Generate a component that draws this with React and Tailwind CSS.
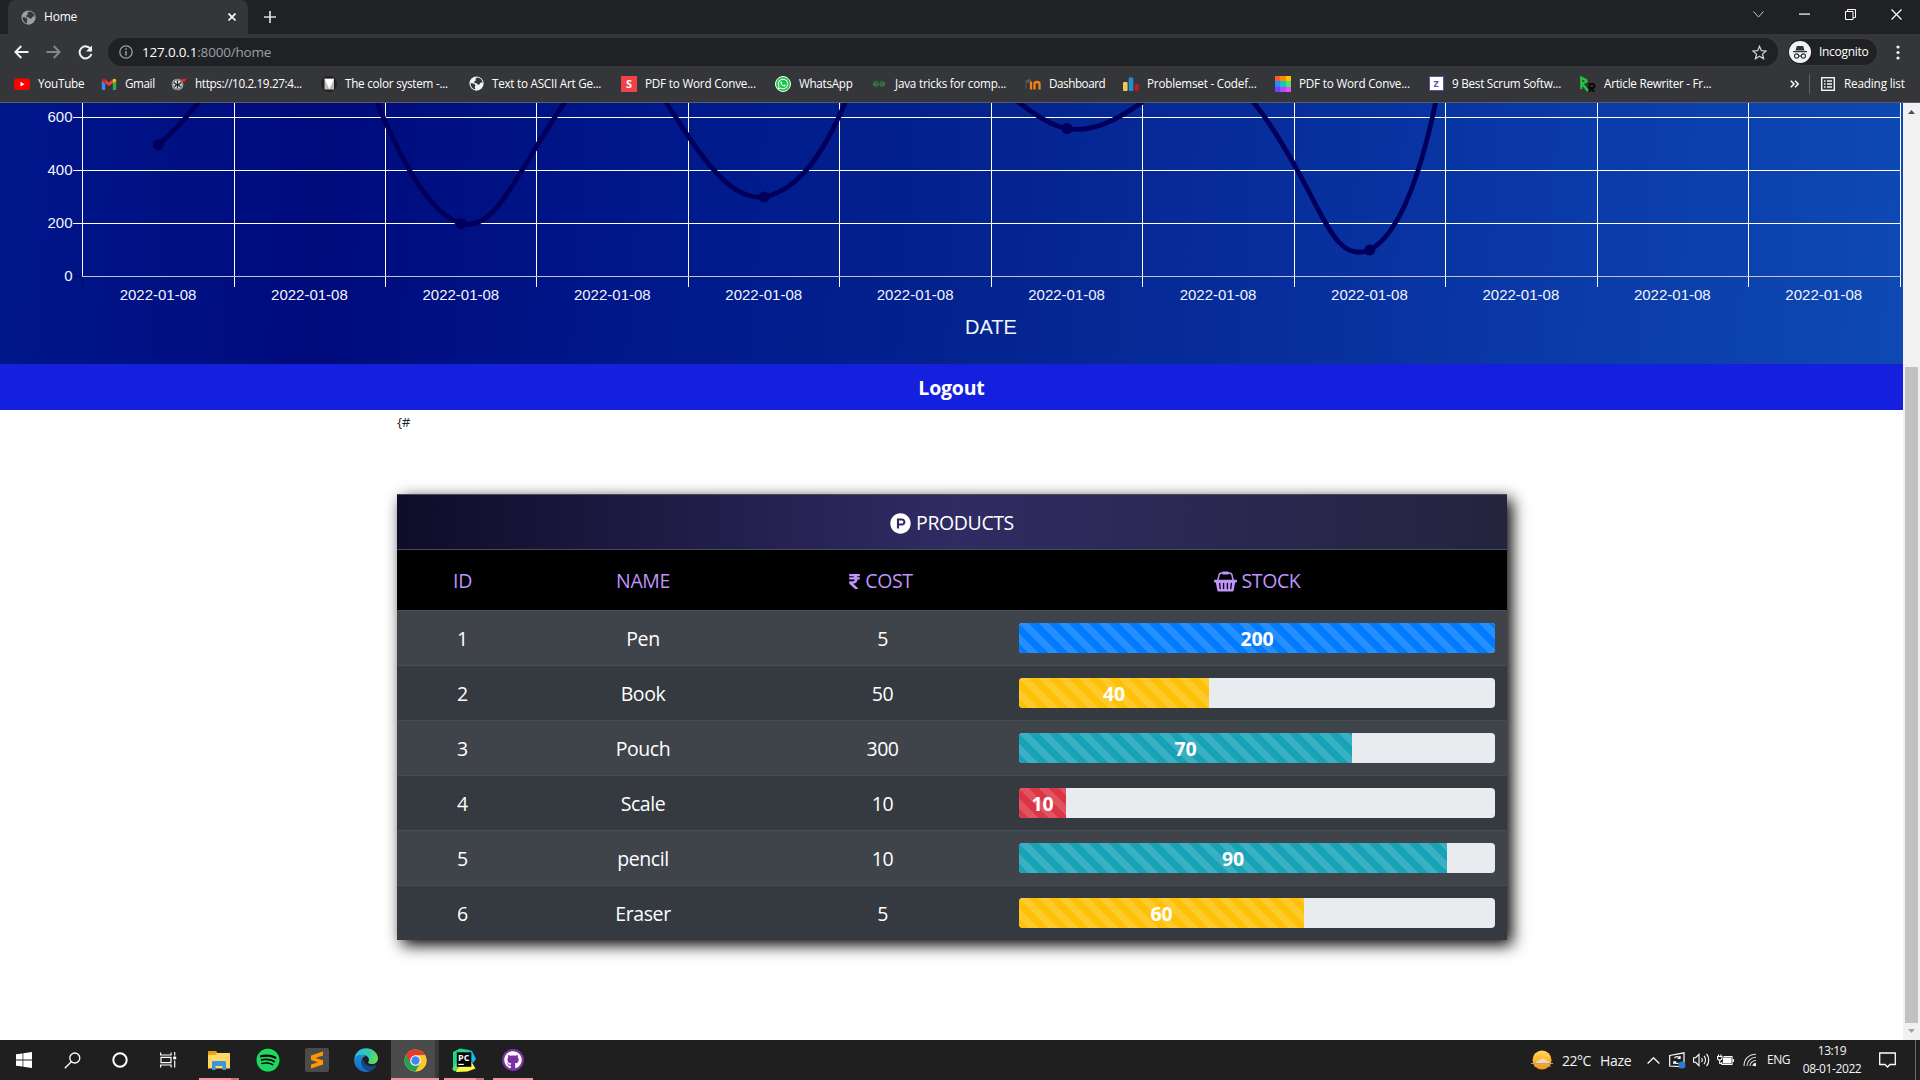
import React from "react";
import { FaProductHunt, FaRupeeSign, FaSpotify, FaGithub, FaWhatsapp } from "react-icons/fa";

const UI = "font-['Open_Sans','Noto_Sans',sans-serif]";

function Globe({ fill, cut }) {
  return (
    <svg width="15" height="15" viewBox="0 0 16 16" className="shrink-0">
      <circle cx="8" cy="8" r="7.6" fill={fill} />
      <path d="M9 1.6c-2 .6-2.4 1.6-1.7 2.4.9 1-1.8 1.2-1.8 2.6S8.600 7.400 9 8.700s2.200.6 2.500-.5 1.500-1.500 3-1.200A6.500 6.500 0 0 0 9 1.600z" fill={cut} />
      <path d="M1.600 7.700c2-.3 4.300.5 5 1.700.7 1.100-.6 1.700-.4 2.700.2.900.5 1.500.2 2.200C3.600 13.600 1.600 11 1.600 7.700z" fill={cut} />
    </svg>
  );
}

const YouTube = () => (
  <svg width="16" height="16" viewBox="0 0 16 16"><rect y="2.500" width="16" height="11.500" rx="3" fill="#f00" /><path d="M6.500 5.800v4.800l4-2.400z" fill="#fff" /></svg>
);
const Gmail = () => (
  <svg width="16" height="16" viewBox="0 0 16 16">
    <path d="M.8 4v9c0 .6.4 1 1 1h2.400V7z" fill="#4285f4" />
    <path d="M15.200 4v9c0 .6-.4 1-1 1h-2.400V7z" fill="#34a853" />
    <path d="M4.200 7.200V3.600L8 6.500l3.800-2.900v3.600L8 10z" fill="#ea4335" />
    <path d="M.8 4.500c0-1.700 1.800-2.500 3.400-1.200v4.200L.8 5z" fill="#c5221f" />
    <path d="M15.200 4.500c0-1.700-1.800-2.500-3.400-1.200v4.200L15.200 5z" fill="#fbbc04" />
  </svg>
);
const Owl = () => (
  <svg width="16" height="16" viewBox="0 0 16 16">
    <circle cx="6.500" cy="8.500" r="5.800" fill="#e8eaed" />
    <path d="M2.800 6.500l2.700 2.200L3.500 11M10.200 6.500L7.500 8.700l2 2.300M6.500 4.500v8" stroke="#222" strokeWidth="1.300" fill="none" />
    <circle cx="6.500" cy="8.500" r="4.800" fill="none" stroke="#222" strokeWidth=".8" />
    <path d="M10 6l1-4 1.500 1.500L15.800 2l-2 3.500z" fill="#f22" />
  </svg>
);
const ColorSys = () => (
  <svg width="16" height="16" viewBox="0 0 16 16"><circle cx="8" cy="8" r="8" fill="#222" /><path d="M3.500 2.800h9.500v10.700h-9.500z" fill="#bdbdbd" /><path d="M3.500 2.800h9.500L8.300 13z" fill="#fff" /></svg>
);
const SIcon = () => (
  <span className="flex h-4 w-4 items-center justify-center bg-[#f0424a] text-[11px] font-bold leading-none text-white">S</span>
);
const WhatsApp = () => (
  <span className="flex h-4 w-4 items-center justify-center rounded-full border border-white bg-[#1bc54c] text-white"><FaWhatsapp size={12} /></span>
);
const Geeks = () => (
  <svg width="14" height="14" viewBox="0 0 16 16" fill="none" stroke="#2f8d46" strokeWidth="1.300">
    <path d="M1 8h14M6.800 6.200C5.500 4.800 2.200 5.300 2 8c.3 3.200 4.500 3.300 5 0M9.200 6.200c1.300-1.400 4.600-.9 4.800 1.800-.3 3.200-4.500 3.300-5 0" />
  </svg>
);
const Moodle = () => (
  <svg width="16" height="16" viewBox="0 0 16 16" fill="none">
    <path d="M8.200 13.500V8c0-2.600 3.300-2.600 3.300 0v5.500M11.500 8M7.200 6v7.500" stroke="none" />
    <path d="M9.500 13.500V7.800c0-2.400 5-2.400 5 0v5.700" stroke="#f98012" strokeWidth="2.300" />
    <path d="M6 5.500v8" stroke="#f98012" strokeWidth="2.300" />
    <path d="M0 5.500l4.500-2 1.500 1L3 6.500zM1 6.500v6" stroke="#5a5a5a" fill="#5a5a5a" strokeWidth="1" />
  </svg>
);
const Codeforces = () => (
  <svg width="16" height="16" viewBox="0 0 16 16"><rect x="0" y="6" width="4.600" height="9" rx="1" fill="#f5c94c" /><rect x="5.700" y="1.500" width="4.600" height="13.500" rx="1" fill="#1e8fcf" /><rect x="11.400" y="8" width="4.600" height="7" rx="1" fill="#b01e23" /></svg>
);
const Rainbow = () => (
  <span className="grid h-4 w-4 grid-cols-3 grid-rows-3">
    <i className="bg-[#ff5a1f]" /><i className="bg-[#ff8a00]" /><i className="bg-[#ffc400]" />
    <i className="bg-[#1f8fff]" /><i className="bg-[#12c8c0]" /><i className="bg-[#53e05a]" />
    <i className="bg-[#7a3cff]" /><i className="bg-[#b04cff]" /><i className="bg-[#f04cff]" />
  </span>
);
const ZIcon = () => (
  <span className="flex h-[15px] w-[15px] items-center justify-center border border-[#5b4fb0] bg-white text-[9px] font-bold leading-none text-[#5b4fb0]">Z</span>
);
const PR = () => (
  <svg width="16" height="16" viewBox="0 0 16 16" fill="none">
    <path d="M9.500 16V8h3a1.900 1.900 0 0 1 0 4H10l4.500 4" stroke="#0c0c0c" strokeWidth="2" />
    <path d="M1.300 13V1.500L6.500 4.500v1L1.300 8M2 7.500L8 15" stroke="#22c93e" strokeWidth="2.200" />
  </svg>
);
const White = () => <Globe fill="#f1f3f4" cut="#35363a" />;

const bookmarks = [
  [YouTube, "YouTube", "w-[87px]", "tracking-[-0.25px]"],
  [Gmail, "Gmail", "w-[70px]", "tracking-[-0.4px]"],
  [Owl, "https://10.2.19.27:4...", "w-[150px]", "tracking-[-0.35px]"],
  [ColorSys, "The color system -...", "w-[147px]", "tracking-[-0.25px]"],
  [White, "Text to ASCII Art Ge...", "w-[153px]", "tracking-[-0.25px]"],
  [SIcon, "PDF to Word Conve...", "w-[154px]", "tracking-[-0.2px]"],
  [WhatsApp, "WhatsApp", "w-[96px]", "tracking-[-0.3px]"],
  [Geeks, "Java tricks for comp...", "w-[154px]", "tracking-[-0.2px]"],
  [Moodle, "Dashboard", "w-[98px]", "tracking-[-0.45px]"],
  [Codeforces, "Problemset - Codef...", "w-[152px]", "tracking-[-0.2px]"],
  [Rainbow, "PDF to Word Conve...", "w-[153px]", "tracking-[-0.2px]"],
  [ZIcon, "9 Best Scrum Softw...", "w-[152px]", "tracking-[-0.25px]"],
  [PR, "Article Rewriter - Fr...", "w-[210px]", "tracking-[-0.25px]"],
];

function TabStrip() {
  return (
    <div className="flex h-[34px] items-stretch bg-[#202124]">
      <div className="ml-2 flex w-[240px] items-center rounded-t-lg bg-[#35363a] pl-[13px] pr-3">
        <Globe fill="#9aa0a6" cut="#35363a" />
        <span className="ml-2 text-[12px] tracking-[-0.2px] text-white">Home</span>
        <svg className="ml-auto" width="8" height="8" viewBox="0 0 8 8" stroke="#fff" strokeWidth="1.600"><path d="M.5.5l7 7M7.500.5l-7 7" /></svg>
      </div>
      <svg className="ml-4 self-center" width="12" height="12" viewBox="0 0 12 12" stroke="#dadce0" strokeWidth="1.700"><path d="M6 0v12M0 6h12" /></svg>
      <div className="ml-auto flex h-7 items-center gap-[35px] pr-[18px]">
        <svg width="11" height="7" viewBox="0 0 11 7" fill="none" stroke="#c8c8c8"><path d="M.5.5l5 5.500 5-5.500" /></svg>
        <svg width="11" height="2" viewBox="0 0 11 2"><rect y=".5" width="11" height="1.200" fill="#fff" /></svg>
        <svg width="11" height="11" viewBox="0 0 11 11" fill="none" stroke="#fff"><path d="M.5 2.500h7.500v8H.5zM2.500 2.500v-2h8v8H8" /></svg>
        <svg width="11" height="11" viewBox="0 0 11 11" stroke="#fff" strokeWidth="1.200"><path d="M.5.5l10 10M10.500.5l-10 10" /></svg>
      </div>
    </div>
  );
}

function AddressBar() {
  return (
    <div className="flex h-[36px] items-center pt-0 pr-[20px] pl-[14px]">
      <svg width="15" height="14" viewBox="0 0 15 14" fill="none" stroke="#f1f3f4" strokeWidth="1.900"><path d="M14.500 7H1.500M7.300 1L1.400 7l5.900 6" /></svg>
      <svg className="ml-[17px]" width="15" height="14" viewBox="0 0 15 14" fill="none" stroke="#85878a" strokeWidth="1.900"><path d="M.5 7h13M7.700 1l5.900 6-5.900 6" /></svg>
      <svg className="ml-[17px]" width="15" height="15" viewBox="0 0 15 15" fill="none" stroke="#f1f3f4" strokeWidth="2"><path d="M12.800 4.300A6 6 0 1 0 13.400 9" /><path d="M14 .5v6H8z" fill="#f1f3f4" stroke="none" /></svg>
      <div className="ml-[15px] flex h-7 w-[1670px] items-center rounded-full bg-[#202124] pr-[11px] pl-[11px]">
        <svg width="14" height="14" viewBox="0 0 14 14" fill="none" stroke="#9aa0a6" strokeWidth="1.300"><circle cx="7" cy="7" r="6.200" /><path d="M7 6v4.500M7 3.300v1.500" strokeWidth="1.500" /></svg>
        <span className="ml-[9px] pt-px text-[13.5px] tracking-[-0.19px] text-[#9aa0a6]"><span className="text-white">127.0.0.1</span>:8000/home</span>
        <svg className="ml-auto" width="15" height="15" viewBox="0 0 24 24" fill="none" stroke="#d0d2d5" strokeWidth="2"><path d="M12 2l3 7 7.500.6-5.700 5 1.700 7.400-6.500-4-6.500 4 1.700-7.400-5.700-5L9 9z" /></svg>
      </div>
      <div className="ml-[9px] flex h-7 w-[91px] items-center rounded-full border border-[#3c3d40] bg-[#202124] pl-px">
        <svg width="22" height="22" viewBox="0 0 22 22"><circle cx="11" cy="11" r="11" fill="#f1f3f4" /><path d="M7.800 5h6.400l1.300 4.500h-9zM4 10h14v1.200H4z" fill="#303134" /><g fill="none" stroke="#303134" strokeWidth="1.100"><circle cx="7.600" cy="15" r="2.100" /><circle cx="14.400" cy="15" r="2.100" /><path d="M9.700 15h2.600" /></g></svg>
        <span className="ml-2 text-[12px] tracking-[-0.3px] text-white">Incognito</span>
      </div>
      <svg className="ml-auto" width="4" height="15" viewBox="0 0 4 15" fill="#f1f3f4"><circle cx="2" cy="2" r="1.600" /><circle cx="2" cy="7.500" r="1.600" /><circle cx="2" cy="13" r="1.600" /></svg>
    </div>
  );
}

function BookmarkBar() {
  return (
    <div className="flex h-[28px] items-center pl-[14px] text-[11.7px] whitespace-nowrap text-white">
      {bookmarks.map(([Icon, label, width, tracking], i) => (
        <div key={i} className={`flex shrink-0 items-center ${width} ${tracking}`}>
          <span className="mr-2 flex h-4 w-4 items-center justify-center"><Icon /></span>
          {label}
        </div>
      ))}
      <svg width="9" height="8" viewBox="0 0 9 8" fill="none" stroke="#fff" strokeWidth="1.500"><path d="M.8.8L4 4 .8 7.200M5 .8L8.200 4 5 7.200" /></svg>
      <div className="ml-[10px] h-5 w-px bg-[#5f6368]" />
      <svg className="ml-[11px]" width="14" height="14" viewBox="0 0 14 14" fill="none" stroke="#f1f3f4" strokeWidth="1.400"><rect x=".7" y=".7" width="12.600" height="12.600" /><path d="M3 4h1.500M3 7h1.500M3 10h1.500M6 4h5M6 7h5M6 10h5" /></svg>
      <span className="ml-[9px] tracking-[-0.15px]">Reading list</span>
    </div>
  );
}

const gridX = [234.5, 385.5, 536.5, 688.5, 839.5, 991.5, 1142.5, 1294.5, 1445.5, 1597.5, 1748.5, 1900.5];
const labelX = gridX.map((x, i) => 158 + i * 151.43);
const ticks = [[600, 14], [400, 67], [200, 120]];

function Chart() {
  return (
    <div className="h-[261px] bg-[linear-gradient(94deg,#00178c_0%,#000b7c_17%,#00188b_34%,#04248f_52%,#08309f_70%,#0b3daa_85%,#0e49b4_100%)]">
      <svg width="1903" height="261" viewBox="0 0 1903 261" className="block font-['Liberation_Sans',Arial,sans-serif]">
        <g stroke="#fff" strokeWidth="1" shapeRendering="crispEdges">
          <path d="M82.500 0V173" />
          {gridX.map((x) => <path key={x} d={`M${x} 0V184`} />)}
          {ticks.map(([v, y]) => <path key={v} d={`M73 ${y + 0.5}H1901`} />)}
          <path d="M82 173.500H1901" stroke="#c3c3cf" />
          <path d="M73 173.500H82M82.500 174V184" stroke="#00086a" />
        </g>
        <g transform="translate(0 -103)">
          <g fill="none" stroke="#00005c" strokeWidth="4.800">
            <path d="M158.300 144.500Q178 129 201 99" />
            <path d="M375.500 99L377 103C396 147 425 212 461 223.500C497 234 520 165 564.500 103L567 99" />
            <path d="M664 99L666.500 103C700 155 729 201 764 197C800 190 825 150 845 103L846.500 99" />
            <path d="M1014 99L1019.600 103C1037 116 1052 126 1067 128.500C1093 133 1118 119 1141 103L1146 99" />
            <path d="M1251 99L1254 103C1276 130 1296 167 1310.600 195C1330 232 1343 261 1369.800 250C1400 234 1421 172 1435.500 103L1436.300 99" />
          </g>
          <g fill="#00005c">
            {[[158.300, 144.500], [461, 223.500], [764, 197], [1067, 128.500], [1369.800, 250]].map(([x, y]) => <circle key={x} cx={x} cy={y} r="5.500" />)}
          </g>
        </g>
        <g fill="#f2f4fb" fontSize="15">
          {ticks.map(([v, y]) => <text key={v} x="72.500" y={y + 5} textAnchor="end">{v}</text>)}
          <text x="72.500" y="178" textAnchor="end">0</text>
          {labelX.map((x) => <text key={x} x={x} y="197" textAnchor="middle">2022-01-08</text>)}
          <text x="991" y="231" fontSize="20" textAnchor="middle">DATE</text>
        </g>
      </svg>
    </div>
  );
}

const Basket = () => (
  <svg width="23" height="21" viewBox="0 0 23 21" fill="none" className="shrink-0">
    <path d="M3.800 9.500L5 4.200C5.300 2.800 6 2 7.400 2h8.200c1.400 0 2.100.8 2.400 2.200l1.200 5.300" stroke="#bf94fb" strokeWidth="1.500" />
    <rect x="8.300" y=".4" width="6.400" height="3.200" rx="1.200" fill="#bf94fb" />
    <rect x="0" y="8.800" width="23" height="2.800" rx="1" fill="#bf94fb" />
    <path d="M1.800 11h19.400l-1.500 8.500c-.1.700-.5 1-1.200 1h-14c-.7 0-1.100-.3-1.200-1z" fill="#bf94fb" />
    <path d="M5.700 12.500l.5 5M9.600 12.500v5M13.400 12.500v5M17.300 12.500l-.5 5" stroke="#000" strokeWidth="1.300" strokeLinecap="round" />
  </svg>
);

const products = [
  [1, "Pen", 5, 200, 100, "bg-[#007bff]"],
  [2, "Book", 50, 40, 40, "bg-[#ffc107]"],
  [3, "Pouch", 300, 70, 70, "bg-[#17a2b8]"],
  [4, "Scale", 10, 10, 10, "bg-[#dc3545]"],
  [5, "pencil", 10, 90, 90, "bg-[#17a2b8]"],
  [6, "Eraser", 5, 60, 60, "bg-[#ffc107]"],
];
const cols = "grid grid-cols-[131px_230px_249px_500px] items-center text-center border-t border-[#454d55]";

function Products() {
  return (
    <div className="ml-[397px] mt-[69px] w-[1110px] bg-[#343a40] text-[19.5px] text-white shadow-[5px_5px_15px_#000]">
      <div className="flex h-[55px] items-center justify-center gap-[5px] border-t border-[#454d55] bg-[linear-gradient(90deg,#0f0c29,#302b63,#24243e)] pt-[2px]">
        <FaProductHunt size={21} />
        <span className="tracking-[-0.4px]">PRODUCTS</span>
      </div>
      <div className={`${cols} h-[61px] bg-black pt-[2px] text-[#bf94fb]`}>
        <span className="tracking-[-0.4px]">ID</span>
        <span className="tracking-[-0.4px]">NAME</span>
        <span className="flex items-center justify-center gap-1 tracking-[-0.4px]"><FaRupeeSign size={17} className="-ml-1 w-[13px]" />COST</span>
        <span className="flex items-center justify-center gap-[5px] tracking-[-0.4px]"><Basket />STOCK</span>
      </div>
      {products.map(([id, name, cost, stock, pct, color], i) => (
        <div key={id} className={`${cols} h-[55px] ${i % 2 ? "" : "bg-[#3f444a]"}`}>
          <span className="pt-[2px]">{id}</span>
          <span className="pt-[2px] tracking-[-0.4px]">{name}</span>
          <span className="pt-[2px] tracking-[-0.5px]">{cost}</span>
          <div className="mx-3 flex h-[30px] overflow-hidden rounded bg-[#e9ecef]">
            <div
              className={`flex items-center justify-center overflow-hidden pt-[2px] font-bold tracking-[-0.1px] bg-[linear-gradient(45deg,rgba(255,255,255,.15)_25%,transparent_25%,transparent_50%,rgba(255,255,255,.15)_50%,rgba(255,255,255,.15)_75%,transparent_75%,transparent)] bg-[length:20px_20px] ${color}`}
              style={{ width: `${Math.floor(4.76 * pct)}px` }}
            >
              {stock}
            </div>
          </div>
        </div>
      ))}
    </div>
  );
}

function Scrollbar() {
  return (
    <div className="flex w-[17px] flex-col items-center bg-[#f1f1f1]">
      <svg width="17" height="17" viewBox="0 0 17 17" className="shrink-0"><path d="M5 11l3.500-4 3.500 4z" fill="#505050" /></svg>
      <div className="mt-[247px] h-[656px] w-[13px] bg-[#c1c1c1]" />
      <svg width="17" height="17" viewBox="0 0 17 17" className="shrink-0"><path d="M5 6l3.500 4L12 6z" fill="#a3a3a3" /></svg>
    </div>
  );
}

const Slot = ({ className = "", bar, children }) => (
  <div className={`relative flex h-10 shrink-0 items-center justify-center ${className}`}>
    {children}
    {bar && <div className={`absolute inset-x-0 bottom-0 h-[2px] ${bar}`} />}
  </div>
);

const Sublime = () => (
  <svg width="24" height="24" viewBox="0 0 24 24"><rect width="24" height="24" rx="2" fill="#4b4b4b" /><path d="M18 4.500v4L10.500 11 18 13.300v4.200L6 21.500v-4l7-2.300-7-2.200V8.500z" fill="#ff9800" transform="translate(0 -1)" /></svg>
);
const Edge = () => (
  <svg width="24" height="24" viewBox="0 0 24 24">
    <defs>
      <linearGradient id="eg" x1="0" y1=".3" x2="1" y2=".5"><stop offset="0" stopColor="#2cb5ea" /><stop offset=".6" stopColor="#35c9b0" /><stop offset="1" stopColor="#68e04b" /></linearGradient>
      <linearGradient id="eb" x1="0" y1="0" x2="0" y2="1"><stop offset="0" stopColor="#1b8fdc" /><stop offset="1" stopColor="#1668c0" /></linearGradient>
    </defs>
    <path d="M.2 11.500C.8 5 5.700.2 12 .2c7 0 12 5 12 10 0 3.600-2.700 5.900-5.900 5.900-2.600 0-4-1-4-1.700 0-.6.900-1 .9-2.600C15 9.200 12.400 7 8.800 7 4.500 7 1.500 9 .2 11.500z" fill="url(#eg)" />
    <path d="M.1 12C1 9 4.600 7 8.800 7c1.500 0 2.700.3 3.700.9-3 .1-5 3-5 6 0 5 4.500 9 9.500 8.900-1.500.8-3.200 1.200-5 1.200C5.400 24 0 18.600.1 12z" fill="url(#eb)" />
    <path d="M9.500 11c-.6 1-2 3-2 3 0 5 4 8.900 9.500 8.800 2.600-1.300 4.600-3.300 5.600-5.400.2-.5-.2-.7-.6-.5-5.500 2.900-12.200.6-12.500-5.900z" fill="#114a8b" />
  </svg>
);
const Chrome = () => (
  <svg width="23" height="23" viewBox="0 0 48 48">
    <circle cx="24" cy="24" r="23" fill="#fbc82e" />
    <path d="M24 24L4.100 12.500A23 23 0 0 0 24 47l10-17.300z" fill="#23a455" />
    <path d="M24 24V13h20.200A23 23 0 0 0 4.100 12.500L14 29.500z" fill="#e33b2e" />
    <path d="M44.200 13H24v11l10 6-10 17A23 23 0 0 0 44.200 13z" fill="#fbc82e" />
    <circle cx="24" cy="24" r="11" fill="#fff" /><circle cx="24" cy="24" r="8.800" fill="#4285f4" />
  </svg>
);
const PyCharm = () => (
  <svg width="24" height="24" viewBox="0 0 24 24">
    <path d="M1 4l7-3.500 9 1.500 1.500 3L5 20l-4 3z" fill="#21d789" />
    <path d="M17 2l3 1 4 8-3 4-4-4z" fill="#07c3f2" />
    <path d="M4 24l1-5 14-6 4.500 7.500-8 3z" fill="#fcf84a" /><path d="M0 21l4-6 3 5-4 3.500z" fill="#5fe070" />
    <rect x="4.800" y="4.300" width="14.500" height="14.500" fill="#000" />
    <text x="6" y="12.500" fontSize="9" fontWeight="bold" fill="#fff" fontFamily="Open Sans, sans-serif">PC</text>
    <rect x="6.300" y="15.800" width="5.500" height="1.200" fill="#fff" />
  </svg>
);

function Taskbar() {
  return (
    <div className="flex h-10 items-center bg-[#1f1f1f] text-[#f5f5f5]">
      <Slot className="w-[48px]"><svg width="16" height="16" viewBox="0 0 16 16" fill="#fff"><path d="M0 2.300l6.600-.9v6.200H0zM7.300 1.300L16 0v7.600H7.300zM0 8.400h6.600v6.200L0 13.700zM7.300 8.400H16V16l-8.700-1.200z" /></svg></Slot>
      <Slot className="w-[48px]"><svg width="17" height="17" viewBox="0 0 17 17" fill="none" stroke="#fff" strokeWidth="1.300"><circle cx="10.800" cy="6" r="5" /><path d="M7.300 9.700L.8 16.200" /></svg></Slot>
      <Slot className="w-[48px]"><svg width="16" height="16" viewBox="0 0 16 16" fill="none" stroke="#fff" strokeWidth="2"><circle cx="8" cy="8" r="6.700" /></svg></Slot>
      <Slot className="w-[48px]"><svg width="17" height="16" viewBox="0 0 17 16" fill="none" stroke="#fff" strokeWidth="1.200"><path d="M.6.5V3h10.500V.5M.6 15.500V13h10.500v2.500M1 5.300h10v5.400H1zM14.700 0v3.500M14.700 8.500v7" /><path d="M13.200 4.500h3v2.800h-3z" fill="#fff" stroke="none" /></svg></Slot>
      <Slot className="ml-[7px] w-[40px]" bar="bg-[linear-gradient(90deg,#f892a0_79%,#c37582_79%)]">
        <svg className="mr-[1px]" width="22" height="19" viewBox="0 0 22 19"><path d="M0 2V1c0-.6.400-1 1-1h7l1.500 2z" fill="#e0a010" /><path d="M0 2h22v15.500H0z" fill="#ffd768" /><path d="M0 4V2h9L7.500 4z" fill="#e9a91d" /><path d="M4 19v-7.500c0-1 .6-1.500 1.500-1.500h11c.9 0 1.500.5 1.500 1.500V19h-3.500v-4h-7v4z" fill="#3b97dc" /></svg>
      </Slot>
      <Slot className="ml-[5px] w-[48px]"><span className="rounded-full bg-black"><FaSpotify size={24} color="#1ed760" /></span></Slot>
      <Slot className="ml-px w-[48px]"><Sublime /></Slot>
      <Slot className="ml-px w-[48px]"><Edge /></Slot>
      <Slot className="ml-px w-[48px] bg-[linear-gradient(90deg,#4b4b4b_92%,#383838_92%)]" bar="bg-[#f892a0]"><Chrome /></Slot>
      <Slot className="ml-[5px] w-[40px]" bar="bg-[linear-gradient(90deg,#f892a0_79%,#c37582_79%)]"><PyCharm /></Slot>
      <Slot className="ml-[9px] w-[40px]" bar="bg-[#f892a0]"><span className="flex h-[22px] w-[22px] items-center justify-center rounded-full bg-[#7d2fa5] text-white"><FaGithub size={18} /></span></Slot>

      <div className="ml-auto flex h-10 items-center">
        <svg width="22" height="20" viewBox="0 0 22 20"><defs><linearGradient id="sun" x1="0" y1="0" x2="0" y2="1"><stop offset="0" stopColor="#ffd75e" /><stop offset="1" stopColor="#ff9500" /></linearGradient></defs><circle cx="11" cy="10" r="9.500" fill="url(#sun)" /><path d="M5 12c1-2 3-1.500 4-2 1.500-2.500 6-2 7 1 2 0 3 1 2 2H6z" fill="#f3d6ad" /><path d="M0 13.500h22M3 16h17" stroke="#b9a28a" strokeWidth="1.200" /></svg>
        <span className="ml-[9px] w-[38px] pt-[1px] text-[14px] tracking-[-0.5px]">22°C</span>
        <span className="w-[47px] pt-[1px] text-[14px] tracking-[-0.3px]">Haze</span>
        <svg width="13" height="7" viewBox="0 0 13 7" fill="none" stroke="#fff" strokeWidth="1.300"><path d="M.6 6.500l5.900-5.700 5.900 5.700" /></svg>
        <svg className="ml-[9px]" width="17" height="17" viewBox="0 0 17 17" fill="none" stroke="#fff" strokeWidth="1.200"><path d="M.7 3.500L15 .8v14L.7 14zM5.500 6.200c1-2 4.500-2 5.300 0M11 4v2.500H8.500M9.500 10.800c-1 1-3.800 1-4.500-.8M4.800 12V9.800h2.500" /><circle cx="12.800" cy="13" r="3.600" fill="#2b7bd6" stroke="none" /></svg>
        <svg className="ml-[7px]" width="17" height="14" viewBox="0 0 17 14" fill="none" stroke="#fff" strokeWidth="1.100"><path d="M.6 4.700h2L6 1.300v11.400L2.600 9.300h-2zM8.500 5c.8 1 .8 3 0 4M11 3c2 2 2 6 0 8M13.500 1c3 3 3 9 0 12" /></svg>
        <svg className="ml-[7px]" width="17" height="12" viewBox="0 0 17 12" fill="none" stroke="#fff" strokeWidth="1.100"><path d="M1.500.5v2M4 .5v2M.6 2.500h4.300v2c0 1-1 1.600-2.100 1.600S.6 5.500.6 4.500zM2.700 6v3.500h2" /><path d="M6.500 2.500H15v8H4.800V8" /><path d="M6.500 4h7v5h-7z" fill="#fff" /><path d="M16.300 5v3" strokeWidth="1.300" /></svg>
        <svg className="ml-[9px]" width="14" height="14" viewBox="0 0 14 14" fill="none" stroke="#ddd" strokeWidth="1.100"><path d="M1 13C1 6 6 1.200 13 1.200M4 13c0-5 4-8.700 9-8.700M7 13c0-3 2.500-5.500 6-5.500M10 13c0-1.500 1-2.500 3-2.700" /><circle cx="11.800" cy="12" r="1.300" fill="#fff" stroke="none" /></svg>
        <span className="ml-[10px] w-[35px] text-[12px] tracking-[-0.5px]">ENG</span>
        <div className="w-[60px] text-center text-[12px] leading-[18px] tracking-[-0.4px]"><div>13:19</div><div>08-01-2022</div></div>
        <svg className="ml-[17px]" width="17" height="17" viewBox="0 0 17 17" fill="none" stroke="#fff" strokeWidth="1.300"><path d="M.7 1h15.600v11.500H11L8.500 15 6 12.500H.7z" /></svg>
        <div className="ml-[19px] h-10 w-px bg-[#6b6b6b]" />
        <div className="w-1" />
      </div>
    </div>
  );
}

export default function App() {
  return (
    <div className={`flex h-[1080px] w-[1920px] flex-col overflow-hidden bg-white ${UI}`}>
      <header className="h-[103px] shrink-0 border-b border-[#5c5d60] bg-[#35363a]">
        <TabStrip />
        <AddressBar />
        <BookmarkBar />
      </header>
      <main className="flex h-[937px] shrink-0">
        <div className="w-[1903px] overflow-hidden">
          <Chart />
          <div className="flex h-[46px] items-center justify-center bg-[#1520df] pt-[2px] text-[19.5px] font-bold tracking-[-0.2px] text-white">Logout</div>
          <div className="ml-[397px] h-[15px] pt-[2px] text-[13.5px] leading-[20px] tracking-[-0.3px] text-[#212529]">{"{#"}</div>
          <Products />
        </div>
        <Scrollbar />
      </main>
      <Taskbar />
    </div>
  );
}
